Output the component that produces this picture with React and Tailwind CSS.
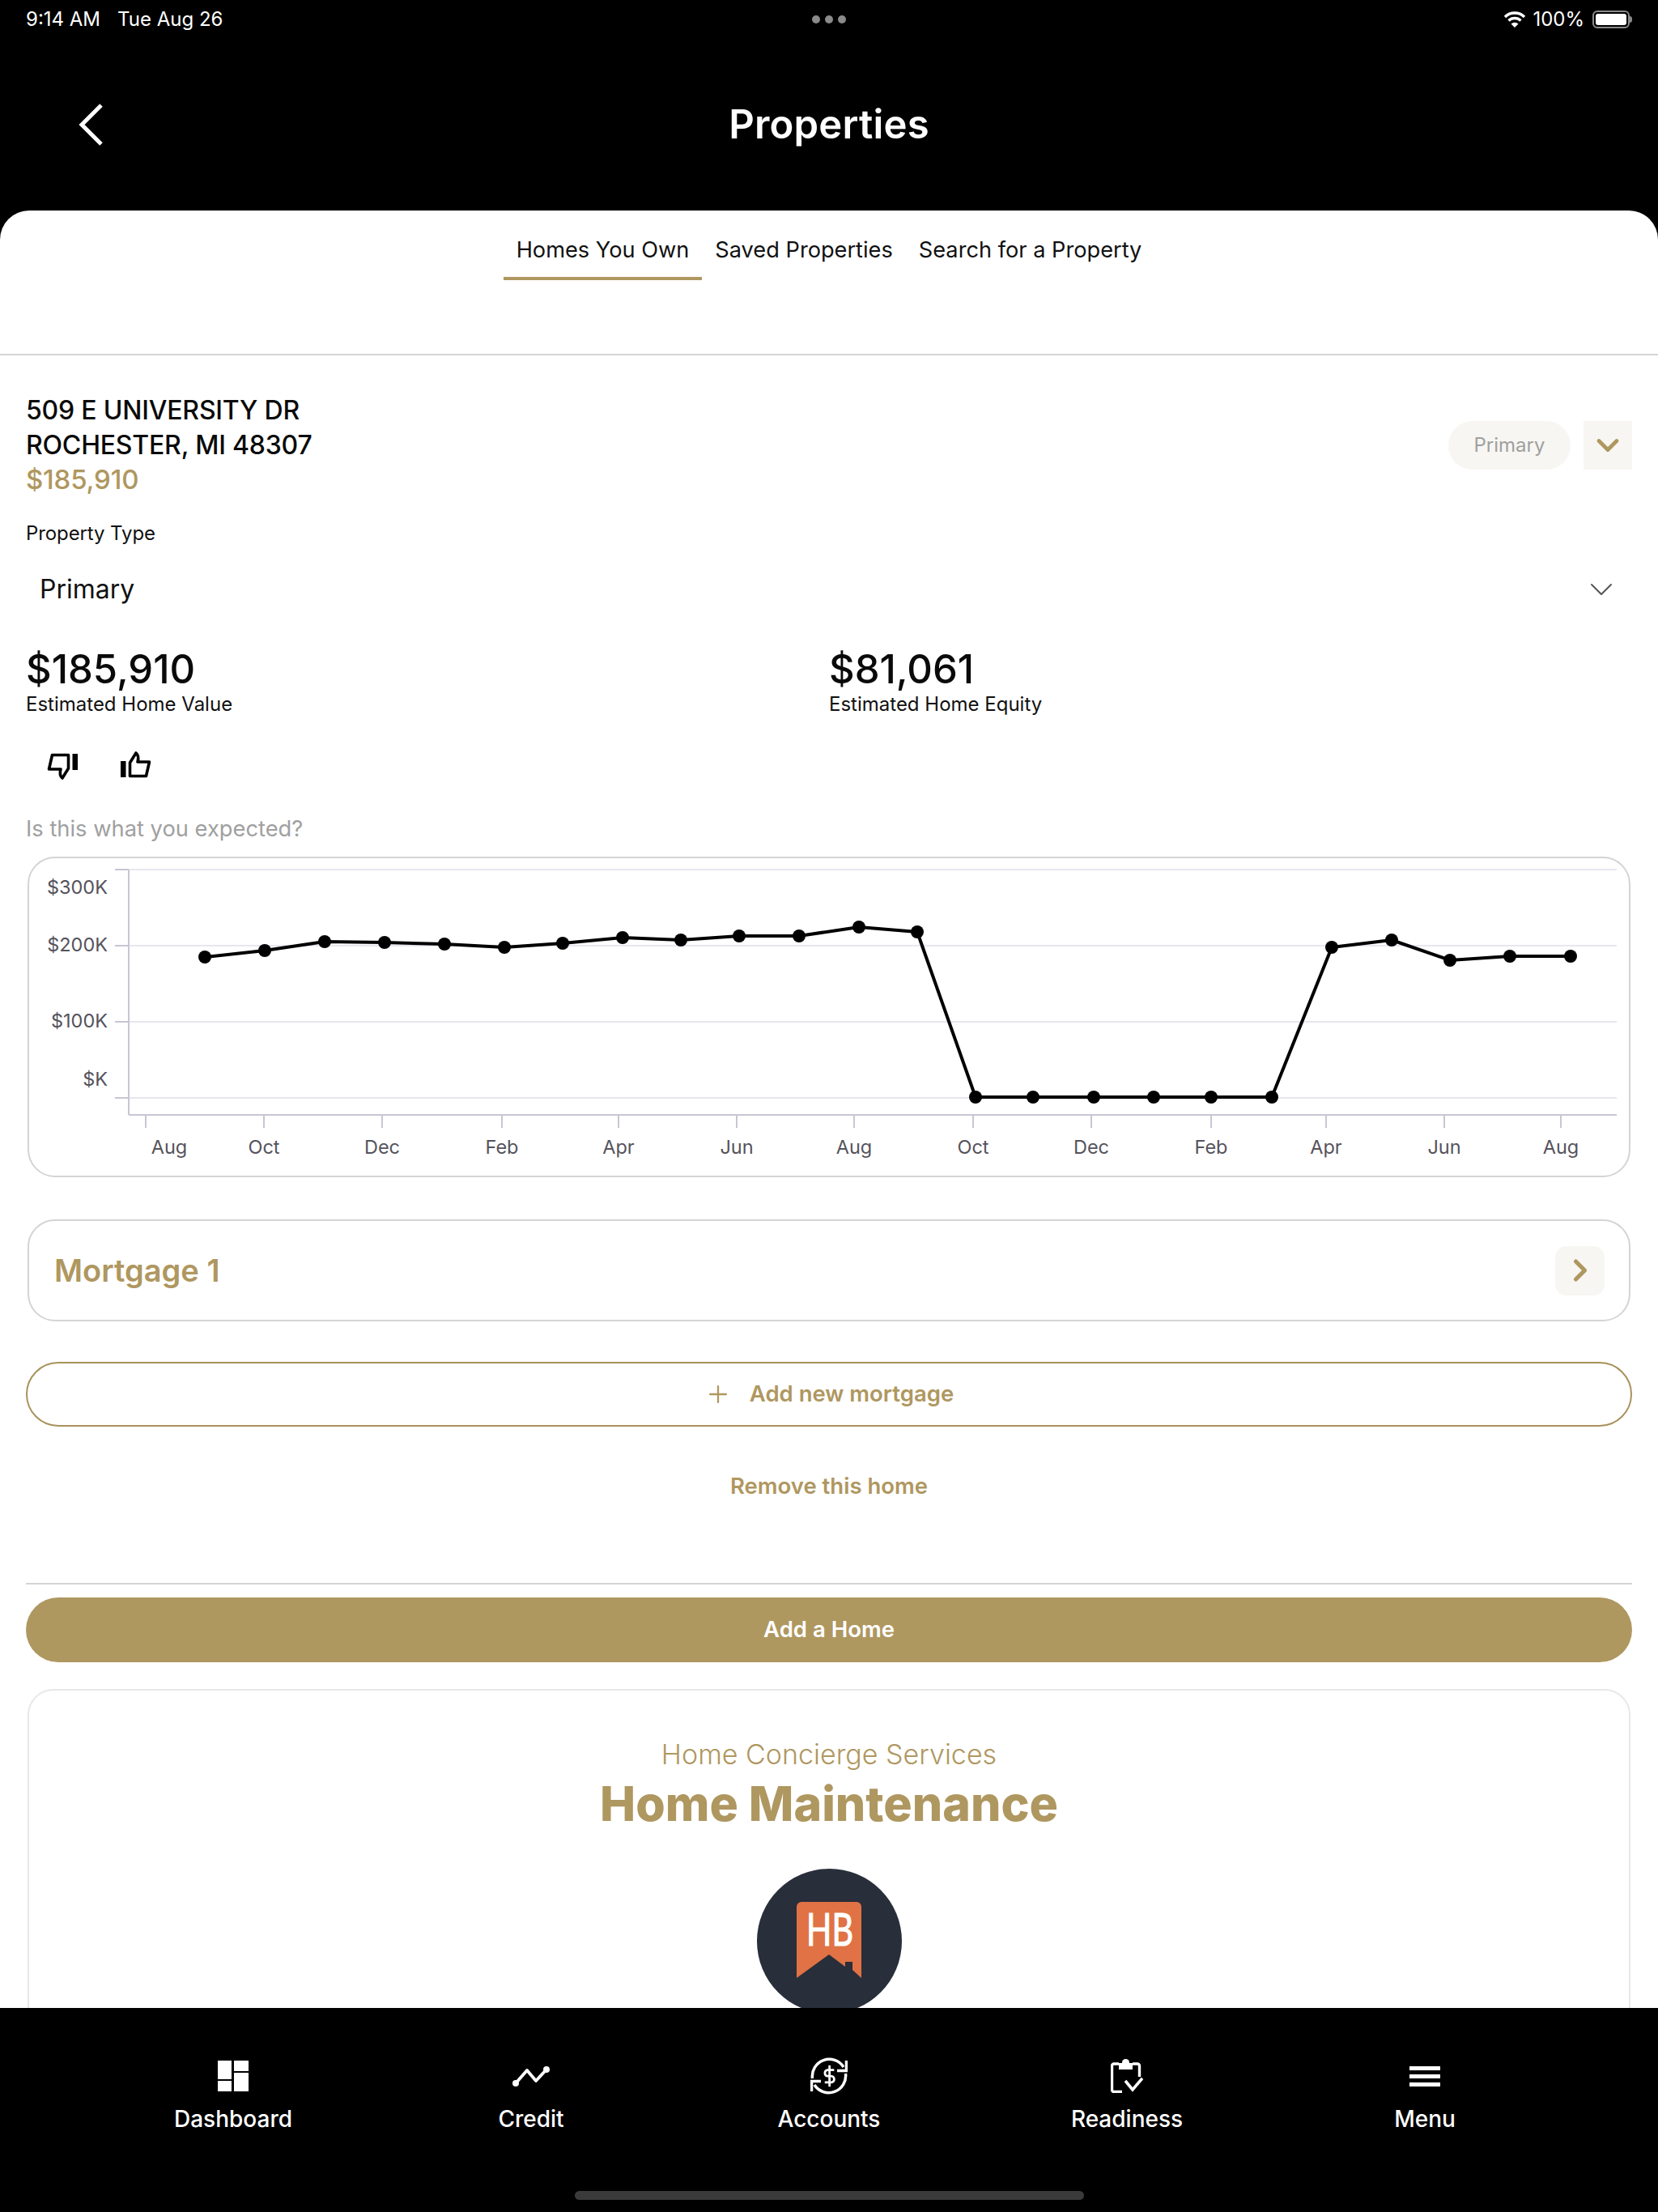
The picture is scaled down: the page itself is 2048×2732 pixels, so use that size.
import React from 'react';
import { Plus, ChevronDown, ChevronRight } from 'lucide-react';

const points = [
  [253, 1182], [327, 1174], [401, 1163], [475, 1164], [549, 1166], [623, 1170], [695, 1165], [769, 1158],
  [841, 1161], [913, 1156], [987, 1156], [1061, 1145], [1133, 1151], [1205, 1355], [1276, 1355], [1351, 1355],
  [1425, 1355], [1496, 1355], [1571, 1355], [1645, 1170], [1719, 1161], [1791, 1186], [1865, 1181], [1940, 1181],
];

const xTicks = [
  [180, 'Aug', 209], [326, 'Oct', 326], [472, 'Dec', 472], [620, 'Feb', 620], [764, 'Apr', 764], [910, 'Jun', 910],
  [1055, 'Aug', 1055], [1202, 'Oct', 1202], [1348, 'Dec', 1348], [1496, 'Feb', 1496], [1638, 'Apr', 1638],
  [1784, 'Jun', 1784], [1928, 'Aug', 1928],
];

const yTicks = [
  [1074, '$300K', 1096], [1168, '$200K', 1167], [1262, '$100K', 1261], [1356, '$K', 1333],
];

const ValueChart = () => (
  <svg viewBox="36 1060 1976 392" className="w-full h-full block">
    {yTicks.map(([y, label, labelY]) => (
      <g key={label}>
        <line x1="142" x2="1997" y1={y} y2={y} stroke="#e9e6f0" strokeWidth="2" />
        <line x1="142" x2="159" y1={y} y2={y} stroke="#c9c5d4" strokeWidth="2" />
        <text x="133" y={labelY + 8} textAnchor="end" fontSize="23.5" fill="#55535c">{label}</text>
      </g>
    ))}
    <line x1="159" x2="159" y1="1074" y2="1377" stroke="#c9c5d4" strokeWidth="2" />
    <line x1="159" x2="1997" y1="1377" y2="1377" stroke="#c9c5d4" strokeWidth="2" />
    {xTicks.map(([x, label, labelX], i) => (
      <g key={i}>
        <line x1={x} x2={x} y1="1377" y2="1393" stroke="#c9c5d4" strokeWidth="2" />
        <text x={labelX} y="1425" textAnchor="middle" fontSize="23.5" fill="#55535c">{label}</text>
      </g>
    ))}
    <polyline points={points.map((p) => p.join(',')).join(' ')} fill="none" stroke="#000" strokeWidth="4" strokeLinejoin="round" />
    {points.map(([x, y], i) => (
      <circle key={i} cx={x} cy={y} r="8" fill="#000" />
    ))}
  </svg>
);

const ThumbIcon = ({ down }) => (
  <svg width="38" height="34" viewBox="0 0 38 34" className={down ? 'rotate-180' : ''}>
    <rect x="0" y="13" width="6.5" height="20" fill="#000" />
    <path d="M11.5 15 L19 3 C22.5 6 22.5 9 21 14 H35.5 L31.5 31.5 H11.5 Z" fill="none" stroke="#000" strokeWidth="3.6" strokeLinejoin="round" />
  </svg>
);

const DashboardIcon = () => (
  <svg width="38" height="38" viewBox="0 0 38 38" fill="#fff">
    <rect x="0" y="0" width="17" height="23" />
    <rect x="0" y="25" width="17" height="13" />
    <rect x="20" y="0" width="18" height="13" />
    <rect x="20" y="15" width="18" height="23" />
  </svg>
);

const CreditIcon = () => (
  <svg width="46" height="25" viewBox="0 0 46 25" fill="#fff">
    <polyline points="4,21 18,5 29,18 42,4" fill="none" stroke="#fff" strokeWidth="3.8" strokeLinejoin="round" />
    <circle cx="4" cy="21" r="4" />
    <circle cx="42" cy="4" r="4" />
  </svg>
);

const AccountsIcon = () => (
  <svg width="46" height="46" viewBox="0 0 46 46" fill="none" stroke="#fff" strokeWidth="3.5">
    <path d="M2.5 26 A21 21 0 0 1 41 12" />
    <path d="M43.5 20 A21 21 0 0 1 5 34" />
    <path d="M44.5 4 V16.5 H33" />
    <path d="M1.5 42 V29.5 H13" />
    <g transform="translate(10.4 9.9) scale(1.05)" strokeWidth="2.6">
      <path d="M12.6 0v25" />
      <path d="M18 5.5H10a3.7 3.7 0 0 0 0 7.2h5a3.7 3.7 0 0 1 0 7.3H7" />
    </g>
  </svg>
);

const ReadinessIcon = () => (
  <svg width="40" height="42" viewBox="0 0 40 42" fill="none" stroke="#fff" strokeWidth="3.4">
    <path d="M10 6 H4 a2.5 2.5 0 0 0 -2.5 2.5 V38 a2.5 2.5 0 0 0 2.5 2.5 H14" />
    <path d="M27 6 H33 a2.5 2.5 0 0 1 2.5 2.5 V22" />
    <rect x="10" y="5" width="17" height="8" fill="#fff" stroke="none" />
    <circle cx="18.5" cy="4.5" r="4.5" fill="#fff" stroke="none" />
    <path d="M18 27 L27 38 L39 24" strokeWidth="3.6" />
  </svg>
);

const MenuIcon = () => (
  <div className="flex flex-col gap-[5px] w-[38px]">
    <div className="h-[5px] bg-white" />
    <div className="h-[5px] bg-white" />
    <div className="h-[5px] bg-white" />
  </div>
);

const navItems = [
  { label: 'Dashboard', icon: <DashboardIcon /> },
  { label: 'Credit', icon: <CreditIcon /> },
  { label: 'Accounts', icon: <AccountsIcon /> },
  { label: 'Readiness', icon: <ReadinessIcon /> },
  { label: 'Menu', icon: <MenuIcon /> },
];

const App = () => {
  return (
    <div className="w-[2048px] h-[2732px] bg-black flex flex-col overflow-hidden font-['Inter',sans-serif]">
      {/* status bar */}
      <div className="h-[48px] shrink-0 px-[32px] grid grid-cols-3 items-center text-white text-[24px] leading-[28px]">
        <div className="flex gap-[21px]">
          <span>9:14 AM</span>
          <span>Tue Aug 26</span>
        </div>
        <div className="flex justify-center gap-[6px]">
          <span className="w-[10px] h-[10px] rounded-full bg-[#8a8a8a]" />
          <span className="w-[10px] h-[10px] rounded-full bg-[#8a8a8a]" />
          <span className="w-[10px] h-[10px] rounded-full bg-[#8a8a8a]" />
        </div>
        <div className="flex items-center justify-end gap-[8px]">
          <svg width="28" height="22" viewBox="0 0 28 22" fill="none" stroke="#fff" strokeWidth="3.4">
            <path d="M2 8 A17 17 0 0 1 26 8" />
            <path d="M6.5 12.5 A11 11 0 0 1 21.5 12.5" />
            <path d="M14 21 L9.5 16.5 A6.5 6.5 0 0 1 18.5 16.5 Z" fill="#fff" stroke="none" />
          </svg>
          <span>100%</span>
          <div className="flex items-center ml-[2px]">
            <div className="w-[46px] h-[22px] rounded-[6px] border-2 border-[#8a8a8a] p-[2px]">
              <div className="w-full h-full rounded-[3px] bg-white" />
            </div>
            <div className="w-[3px] h-[8px] rounded-r-full bg-[#8a8a8a]" />
          </div>
        </div>
      </div>

      {/* header */}
      <div className="h-[212px] shrink-0 grid grid-cols-3 items-center">
        <div className="pl-[97px]">
          <svg width="32" height="52" viewBox="0 0 32 52" fill="none" stroke="#fff" strokeWidth="5">
            <path d="M28 2 L4 26 L28 50" />
          </svg>
        </div>
        <h1 className="text-center text-white font-semibold text-[49px] leading-[60px] tracking-[0.2px]">Properties</h1>
      </div>

      {/* sheet */}
      <div className="flex-1 min-h-0 overflow-hidden bg-white rounded-t-[36px]">
        <div className="h-[179px] border-b-2 border-[#d4d4d4] flex justify-center text-[27.2px] leading-[34px] text-[#111]">
          <div className="h-[86px] pt-[32px] px-[16px] border-b-4 border-[#af9760]">Homes You Own</div>
          <div className="h-[86px] pt-[32px] px-[16px]">Saved Properties</div>
          <div className="h-[86px] pt-[32px] px-[16px]">Search for a Property</div>
        </div>

        <div className="px-[32px]">
          <div className="pt-[46px] flex items-center justify-between">
            <div className="text-[32px] leading-[43px] font-medium text-[#0a0a0a] tracking-[-0.2px]">
              <div>509 E UNIVERSITY DR</div>
              <div>ROCHESTER, MI 48307</div>
              <div className="text-[33px] text-[#af9760]">$185,910</div>
            </div>
            <div className="flex items-center gap-[16px]">
              <div className="w-[151px] h-[60px] rounded-full bg-[#f7f6f2] flex items-center justify-center text-[24px] text-[#a0a0a0]">Primary</div>
              <div className="w-[60px] h-[60px] bg-[#f7f6f2] flex items-center justify-center">
                <ChevronDown size={44} color="#af9760" strokeWidth={2.6} />
              </div>
            </div>
          </div>

          <div className="mt-[30px] text-[24px] leading-[30px] text-[#111] tracking-[-0.1px]">Property Type</div>
          <div className="mt-[24px] h-[60px] pl-[17px] pr-[14px] flex items-center justify-between text-[32px] text-[#111]">
            <span>Primary</span>
            <ChevronDown size={48} color="#555" strokeWidth={1} />
          </div>

          <div className="mt-[41px] grid grid-cols-2">
            <div>
              <div className="text-[49px] leading-[56px] font-medium text-[#0a0a0a]">$185,910</div>
              <div className="text-[24px] leading-[30px] text-[#111]">Estimated Home Value</div>
            </div>
            <div>
              <div className="text-[49px] leading-[56px] font-medium text-[#0a0a0a]">$81,061</div>
              <div className="text-[24px] leading-[30px] text-[#111]">Estimated Home Equity</div>
            </div>
          </div>

          <div className="mt-[42px] pl-[26px] h-[36px] flex items-start gap-[53px]">
            <div className="mt-[3px]"><ThumbIcon down /></div>
            <ThumbIcon />
          </div>

          <div className="mt-[44px] text-[27.3px] leading-[34px] text-[#a0a0a0]">Is this what you expected?</div>

          <div className="mt-[17px] mx-[2px] h-[396px] rounded-[34px] border-2 border-[#d4d4d4] overflow-hidden">
            <ValueChart />
          </div>

          <div className="mt-[52px] mx-[2px] h-[126px] rounded-[34px] border-2 border-[#d4d4d4] pl-[31px] pr-[30px] flex items-center justify-between">
            <span className="text-[38px] font-semibold text-[#af9760]">Mortgage 1</span>
            <div className="w-[61px] h-[61px] rounded-[14px] bg-[#f7f6f2] flex items-center justify-center">
              <ChevronRight size={44} color="#af9760" strokeWidth={2.8} />
            </div>
          </div>

          <div className="mt-[50px] h-[80px] rounded-full border-2 border-[#a8925c] flex items-center justify-center gap-[22px] text-[27.5px] font-semibold text-[#af9760]">
            <Plus size={34} strokeWidth={1.6} />
            <span>Add new mortgage</span>
          </div>

          <div className="mt-[55px] text-center text-[27.5px] leading-[36px] font-semibold text-[#af9760]">Remove this home</div>

          <div className="mt-[102px] h-[2px] bg-[#d4d4d4]" />

          <div className="mt-[16px] h-[80px] rounded-full bg-[#af9760] flex items-center justify-center text-[27.5px] font-semibold text-white">Add a Home</div>

          <div className="mt-[33px] mx-[2px] h-[500px] rounded-[32px] border-2 border-[#e8e8e8] pt-[57px] flex flex-col items-center">
            <div className="text-[34px] leading-[44px] font-light text-[#af9760]">Home Concierge Services</div>
            <div className="mt-[4px] text-[59px] leading-[70px] font-extrabold text-[#af9760]">Home Maintenance</div>
            <div className="mt-[45px] w-[179px] h-[179px] rounded-full bg-[#282e3a] flex items-center justify-center">
              <svg width="160" height="115" viewBox="-40 -10 160 115" className="mt-[-3px]">
                <path d="M0 6 a6 6 0 0 1 6 -6 H74 a6 6 0 0 1 6 6 V94 L69 84 V74 H60 V80 L40 65 L0 94 Z" fill="#e07245" />
                <text x="12" y="54" fontSize="56" fontWeight="400" fill="#fff" stroke="#fff" strokeWidth="1.2" textLength="58" lengthAdjust="spacingAndGlyphs" fontFamily="Lato, sans-serif">HB</text>
              </svg>
            </div>
          </div>
        </div>
      </div>

      {/* bottom nav */}
      <div className="h-[252px] shrink-0 bg-black px-[104px] flex flex-col">
        <div className="grid grid-cols-5 h-[226px]">
          {navItems.map((item) => (
            <div key={item.label} className="flex flex-col items-center">
              <div className="h-[46px] mt-[61px] flex items-center justify-center">{item.icon}</div>
              <div className="mt-[13px] text-[28px] leading-[34px] font-medium text-white">{item.label}</div>
            </div>
          ))}
        </div>
        <div className="mx-auto w-[629px] h-[11px] rounded-full bg-[#3a3a3a]" />
      </div>
    </div>
  );
};

export default App;
